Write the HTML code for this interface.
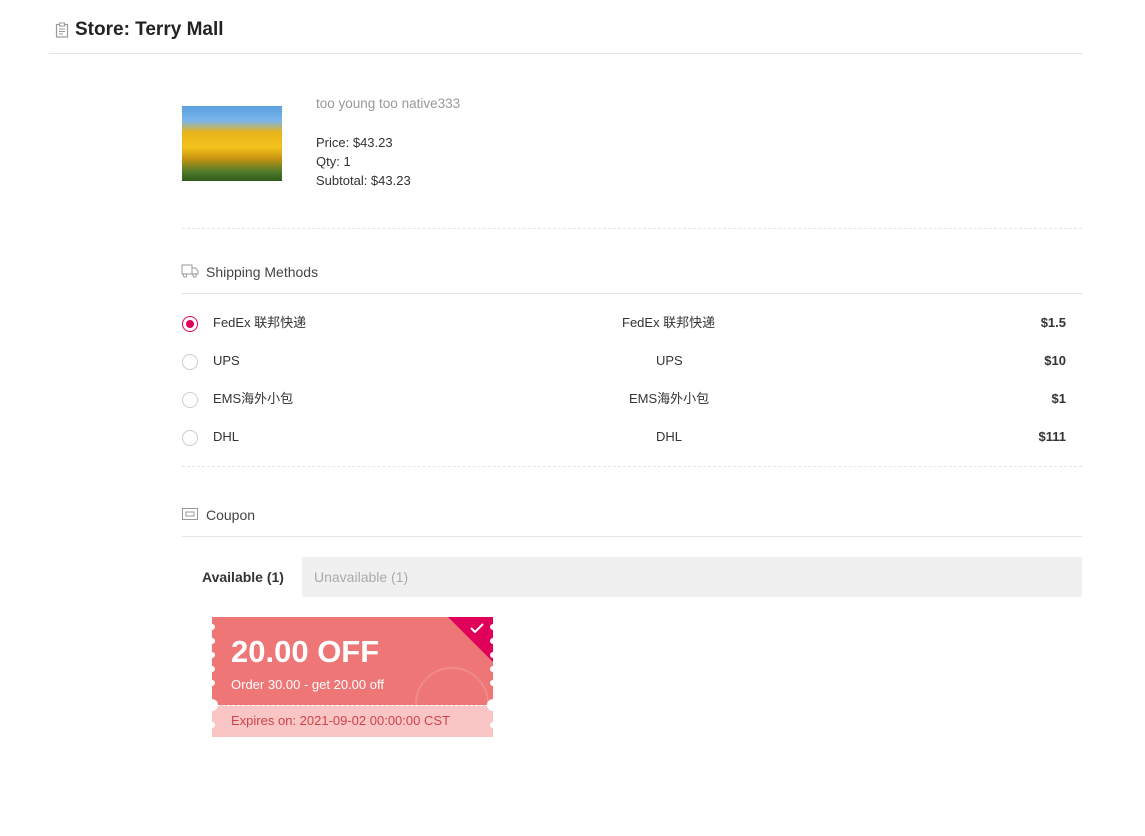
<!DOCTYPE html>
<html><head><meta charset="utf-8"><style>
body{margin:0;background:#fff;font-family:"Liberation Sans","Noto Sans CJK SC",sans-serif;color:#333;width:1145px;height:836px;position:relative;overflow:hidden}
.a{position:absolute}
.t{font-size:13px;white-space:nowrap;line-height:16px}
.r{top:0;bottom:0;width:8px}
</style></head><body>
<svg class="a" style="left:55px;top:22px" width="14" height="16" viewBox="0 0 14 16"><rect x="1.5" y="2.5" width="11" height="12.5" fill="none" stroke="#999" stroke-width="1.2"/><rect x="4.5" y="1" width="5" height="3" fill="#fff" stroke="#999"/><path d="M4 7h6M4 9.5h6M4 12h4" stroke="#999"/></svg>
<div class="a" style="left:75px;top:19px;font-size:19px;line-height:22px;font-weight:bold;color:#222">Store: Terry Mall</div>
<div class="a" style="left:49px;top:53px;width:1033px;height:1px;background:#e5e5e5"></div>

<div class="a" style="left:182px;top:106px;width:100px;height:75px;background:linear-gradient(180deg,#5aa0e0 0%,#7bb6ea 20%,#e8b41a 35%,#f2c21c 55%,#c99412 70%,#4d7a2a 88%,#2f5a1a 100%)"></div>
<div class="a t" style="left:316px;top:96px;color:#999;font-size:13.5px">too young too native333</div>
<div class="a t" style="left:316px;top:135px">Price: $43.23</div>
<div class="a t" style="left:316px;top:154px">Qty: 1</div>
<div class="a t" style="left:316px;top:173px">Subtotal: $43.23</div>
<div class="a" style="left:182px;top:228px;width:900px;border-top:1px dashed #e5e5e5"></div>

<svg class="a" style="left:181px;top:264px" width="18" height="14" viewBox="0 0 18 14"><path d="M1 1h10v9H1zM11 4h3.5l2.5 3v3h-6" fill="none" stroke="#999"/><circle cx="4" cy="11.5" r="1.6" fill="#fff" stroke="#999"/><circle cx="13.5" cy="11.5" r="1.6" fill="#fff" stroke="#999"/></svg>
<div class="a" style="left:206px;top:263px;font-size:14px;line-height:18px;color:#444">Shipping Methods</div>
<div class="a" style="left:182px;top:293px;width:900px;height:1px;background:#e5e5e5"></div>

<div class="a" style="left:182px;top:316px;width:16px;height:16px;border:1px solid #e0005a;border-radius:50%;box-sizing:border-box"><div style="margin:3px;width:8px;height:8px;border-radius:50%;background:#e0005a"></div></div>
<div class="a t" style="left:213px;top:315px">FedEx 联邦快递</div>
<div class="a t" style="left:622px;top:315px">FedEx 联邦快递</div>
<div class="a t" style="right:79px;top:315px;font-weight:bold">$1.5</div>

<div class="a" style="left:182px;top:354px;width:16px;height:16px;border:1px solid #ccc;border-radius:50%;box-sizing:border-box"></div>
<div class="a t" style="left:213px;top:353px">UPS</div>
<div class="a t" style="left:656px;top:353px">UPS</div>
<div class="a t" style="right:79px;top:353px;font-weight:bold">$10</div>

<div class="a" style="left:182px;top:392px;width:16px;height:16px;border:1px solid #ccc;border-radius:50%;box-sizing:border-box"></div>
<div class="a t" style="left:213px;top:391px">EMS海外小包</div>
<div class="a t" style="left:629px;top:391px">EMS海外小包</div>
<div class="a t" style="right:79px;top:391px;font-weight:bold">$1</div>

<div class="a" style="left:182px;top:430px;width:16px;height:16px;border:1px solid #ccc;border-radius:50%;box-sizing:border-box"></div>
<div class="a t" style="left:213px;top:429px">DHL</div>
<div class="a t" style="left:656px;top:429px">DHL</div>
<div class="a t" style="right:79px;top:429px;font-weight:bold">$111</div>
<div class="a" style="left:182px;top:466px;width:900px;border-top:1px dashed #e5e5e5"></div>

<svg class="a" style="left:182px;top:508px" width="16" height="12" viewBox="0 0 16 12"><rect x="0.5" y="0.5" width="15" height="11" fill="none" stroke="#999"/><rect x="4" y="4" width="8" height="4" fill="none" stroke="#999"/></svg>
<div class="a" style="left:206px;top:506px;font-size:14px;line-height:18px;color:#444">Coupon</div>
<div class="a" style="left:182px;top:536px;width:900px;height:1px;background:#e5e5e5"></div>

<div class="a" style="left:302px;top:557px;width:780px;height:40px;background:#f0f0f0"></div>
<div class="a" style="left:202px;top:569px;font-size:14px;line-height:17px;font-weight:bold;color:#333">Available (1)</div>
<div class="a" style="left:314px;top:569px;font-size:14px;line-height:17px;color:#aaa">Unavailable (1)</div>

<div class="a" style="left:212px;top:617px;width:281px;height:88px;background:#ef7676;overflow:hidden">
<div class="a" style="right:0;top:0;width:0;height:0;border-top:45px solid #e0005a;border-left:45px solid transparent"></div>
<svg class="a" style="right:8px;top:5px" width="16" height="12"><path d="M2 6l4 4 8-8" fill="none" stroke="#fff" stroke-width="2"/></svg>
<div class="a" style="left:203px;top:50px;width:70px;height:70px;border:2px solid rgba(255,255,255,.15);border-radius:50%"></div>
</div>
<div class="a" style="left:212px;top:705px;width:281px;height:32px;background:#f9c5c5;border-top:1px dashed #fff;box-sizing:border-box"></div>
<svg class="a" style="left:208px;top:617px" width="290" height="120">
<g fill="#fff">
<circle cx="4" cy="10" r="3"/><circle cx="4" cy="24" r="3"/><circle cx="4" cy="38" r="3"/><circle cx="4" cy="52" r="3"/><circle cx="4" cy="66" r="3"/><circle cx="4" cy="88" r="6"/><circle cx="4" cy="108" r="3"/>
<circle cx="285" cy="10" r="3"/><circle cx="285" cy="24" r="3"/><circle cx="285" cy="38" r="3"/><circle cx="285" cy="52" r="3"/><circle cx="285" cy="66" r="3"/><circle cx="285" cy="88" r="6"/><circle cx="285" cy="108" r="3"/>
</g></svg>
<div class="a" style="left:231px;top:633px;font-size:31px;line-height:38px;font-weight:bold;color:#fff">20.00 OFF</div>
<div class="a" style="left:231px;top:677px;font-size:13px;line-height:16px;color:#fff">Order 30.00 - get 20.00 off</div>
<div class="a" style="left:231px;top:713px;font-size:13px;line-height:16px;color:#d0434a">Expires on: 2021-09-02 00:00:00 CST</div>
</body></html>
